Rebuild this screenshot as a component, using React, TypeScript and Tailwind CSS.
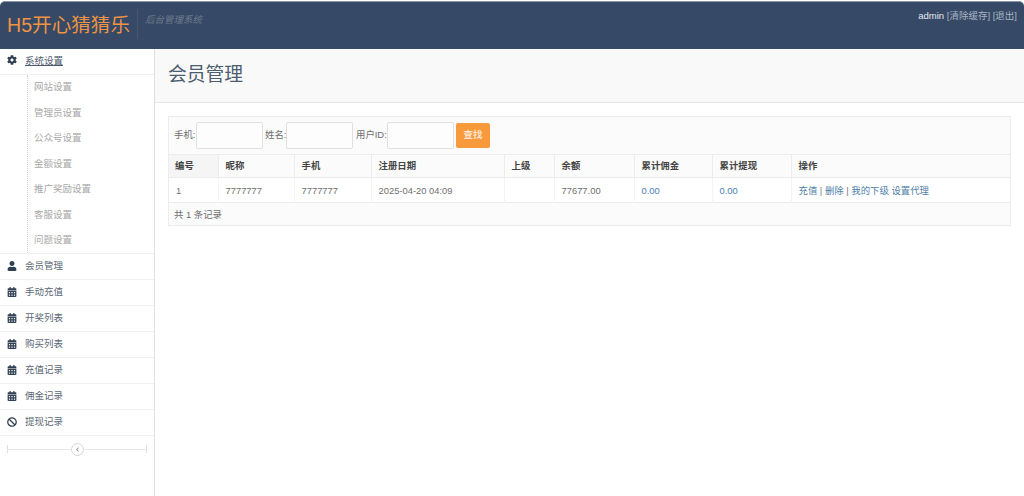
import { FaBan, FaCalendarAlt, FaChevronLeft, FaCog, FaUser } from "react-icons/fa";
import type { ComponentType } from "react";

const font = { fontFamily: '"Liberation Sans", "Noto Sans CJK SC", sans-serif' };

const subNav = ["网站设置", "管理员设置", "公众号设置", "金额设置", "推广奖励设置", "客服设置", "问题设置"];

const mainNav: { icon: ComponentType<{ className?: string }>; label: string }[] = [
  { icon: FaUser, label: "会员管理" },
  { icon: FaCalendarAlt, label: "手动充值" },
  { icon: FaCalendarAlt, label: "开奖列表" },
  { icon: FaCalendarAlt, label: "购买列表" },
  { icon: FaCalendarAlt, label: "充值记录" },
  { icon: FaCalendarAlt, label: "佣金记录" },
  { icon: FaBan, label: "提现记录" },
];

const columns = [
  { label: "编号", width: "w-[49px]" },
  { label: "昵称", width: "w-[76px]" },
  { label: "手机", width: "w-[77px]" },
  { label: "注册日期", width: "w-[133px]" },
  { label: "上级", width: "w-[50px]" },
  { label: "余额", width: "w-[80px]" },
  { label: "累计佣金", width: "w-[78px]" },
  { label: "累计提现", width: "w-[79px]" },
  { label: "操作", width: "w-auto" },
];

const Field = ({ label, labelWidth }: { label: string; labelWidth: string }) => (
  <>
    <span className={`${labelWidth} whitespace-nowrap`}>{label}</span>
    <input className="h-[27px] w-[67px] rounded-[2px] border border-[#e0e0e0] bg-[#fdfdfd]" />
  </>
);

const Sidebar = () => (
  <aside className="w-[155px] shrink-0 border-r border-[#e0e0e0] bg-white text-[9.5px]">
    <div className="flex h-[25.5px] items-center border-b border-[#f0f0f0] pl-[7px] text-[#4b5a6b]">
      <FaCog className="-mt-[2px] h-[10px] w-[10px] text-[#2f3f52]" />
      <span className="ml-[8px] underline">系统设置</span>
    </div>
    <div className="relative ml-[27px] border-l border-dotted border-[#cfcfcf]">
      {subNav.map((label) => (
        <div key={label} className="flex h-[25.5px] items-center pl-[6px] text-[#a8a8a8]">
          {label}
        </div>
      ))}
    </div>
    {mainNav.map((item) => (
      <div
        key={item.label}
        className="flex h-[26px] items-center border-t border-[#f0f0f0] pl-[7px] text-[#5b6875]"
      >
        <item.icon className="-mt-[2px] h-[10px] w-[10px] text-[#2f3f52]" />
        <span className="ml-[8px]">{item.label}</span>
      </div>
    ))}
    <div className="flex h-[27px] items-center border-t border-[#f0f0f0] px-[7px]">
      <div className="flex h-[8px] w-full items-center border-x border-[#e0e0e0]">
        <div className="h-px flex-1 bg-[#e8e8e8]" />
        <div className="flex h-[13px] w-[13px] items-center justify-center rounded-full border border-[#d8d8d8] bg-white">
          <FaChevronLeft className="h-[5px] w-[5px] text-[#8a8a8a]" />
        </div>
        <div className="h-px flex-1 bg-[#e8e8e8]" />
      </div>
    </div>
  </aside>
);

export default function App() {
  return (
    <div className="flex h-[496px] w-[1024px] flex-col overflow-hidden bg-white pt-px" style={font}>
      <header className="flex h-[48px] shrink-0 justify-between rounded-t-[5px] border-t border-[#8b98a8] bg-[#364966] pl-[7px] pr-[7px]">
        <div className="flex items-start">
          <div className="mt-[9px] text-[19.6px] leading-[28px] text-[#ee9443]">H5开心猜猜乐</div>
          <div className="ml-[7px] mt-[7px] h-[30px] border-l border-[#46576e]" />
          <div className="ml-[7px] mt-[12px] text-[9.5px] italic leading-[12px] text-[#6d7b8e]">后台管理系统</div>
        </div>
        <div className="mt-[8px] text-[9.5px] leading-[12px] text-[#a9b4c2]">
          <span className="text-[#e8ebef]">admin</span> [清除缓存] [退出]
        </div>
      </header>

      <div className="flex min-h-0 flex-1">
        <Sidebar />
        <main className="min-w-0 flex-1 text-[9.4px]">
          <div className="flex h-[54px] items-center border-b border-[#e6e6e6] bg-[#f9f9f9] pl-[13px] text-[18.8px] text-[#4b5c6e]">
            会员管理
          </div>
          <div className="pl-[13px] pr-[13px] pt-[13px]">
            <div className="border border-[#ececec] text-[#707070]">
              <div className="flex h-[37px] items-center bg-[#fbfbfb] pl-[5px] text-[#6e6e6e]">
                <Field label="手机:" labelWidth="w-[22px]" />
                <span className="w-[2px]" />
                <Field label="姓名:" labelWidth="w-[21px]" />
                <span className="w-[3px]" />
                <Field label="用户ID:" labelWidth="w-[31px]" />
                <button className="ml-[2px] h-[25px] w-[34px] rounded-[2px] bg-[#f89a3c] text-[9.5px] font-bold text-[#fde6cf]">
                  查找
                </button>
              </div>
              <table className="w-full table-fixed border-collapse">
                <thead>
                  <tr className="h-[23px] border-y border-[#ececec] bg-[#fbfbfb] text-left font-bold text-[#444]">
                    {columns.map((col, i) => (
                      <th
                        key={col.label}
                        className={`${col.width} border-l border-[#ececec] font-bold first:border-l-0 ${i === 0 ? "bg-[#f5f5f5] pl-[6px]" : "pl-[7px]"}`}
                      >
                        {col.label}
                      </th>
                    ))}
                  </tr>
                </thead>
                <tbody>
                  <tr className="h-[25px] border-b border-[#ececec] bg-white text-[#707070]">
                    <td className="pl-[7px] pt-[2px]">1</td>
                    <td className="border-l border-[#f4f4f4] pl-[7px] pt-[2px]">7777777</td>
                    <td className="border-l border-[#f4f4f4] pl-[7px] pt-[2px]">7777777</td>
                    <td className="border-l border-[#f4f4f4] pl-[7px] pt-[2px]">2025-04-20 04:09</td>
                    <td className="border-l border-[#f4f4f4] pl-[7px] pt-[2px]"></td>
                    <td className="border-l border-[#f4f4f4] pl-[7px] pt-[2px]">77677.00</td>
                    <td className="border-l border-[#f4f4f4] pl-[7px] pt-[2px] text-[#4a80b4]">0.00</td>
                    <td className="border-l border-[#f4f4f4] pl-[7px] pt-[2px] text-[#4a80b4]">0.00</td>
                    <td className="border-l border-[#f4f4f4] pl-[7px] pt-[2px] text-[#4f81a8]">
                      充值 <span className="text-[#777]">|</span> 删除 <span className="text-[#777]">|</span> 我的下级 设置代理
                    </td>
                  </tr>
                </tbody>
              </table>
              <div className="flex h-[22px] items-center bg-[#fbfbfb] pl-[5px] pt-[2px] text-[#6e6e6e]">共 1 条记录</div>
            </div>
          </div>
        </main>
      </div>
    </div>
  );
}
